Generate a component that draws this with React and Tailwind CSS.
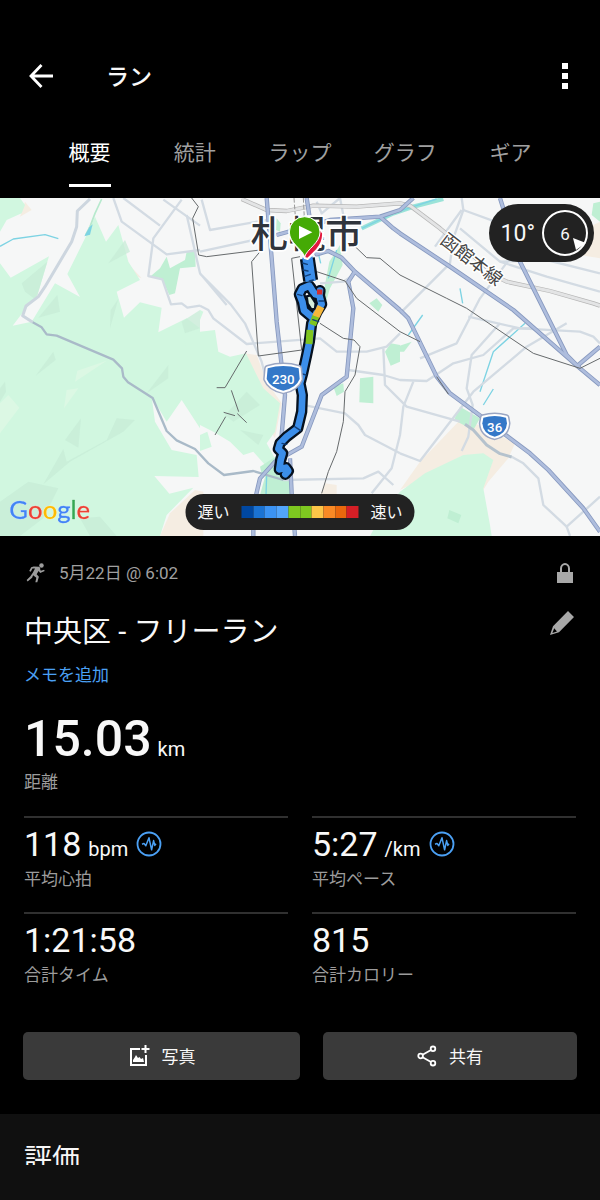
import React from "react";

const FOREST = "#d1f7e0";
const PARK = "#bfefd3";
const SHADE = "#c7ecd7";
const SAND = "#f5ede2";
const MINOR = "#d3dbe3";
const WATER = "#7dd3e3";

const forests = [
  "M0 9H60L75 30L65 55L20 75L0 110Z",
  "M0 205L32 248L147 184L112 300L70 350L38 392L95 380L165 265L240 306L202 237L255 130L285 65L318 140L355 90L385 200L420 255L350 290L372 368L420 322L485 338L475 412L560 370L600 400V700L545 615L500 680L455 605L465 680L515 765L590 780L596 846L463 843L508 896L580 878L500 960L480 1023H0Z",
  "M550 415L600 410L645 405L655 470L690 485L738 475L760 520L790 580L840 625L825 710L800 745L830 800L800 815L760 770L730 780L690 740L640 710L600 690Z",
  "M1200 890L1275 835L1390 780L1450 775L1480 795L1450 880L1470 990L1475 1023H1110L1150 950Z",
  "M600 345L610 350L600 375Z",
  "M600 720L622 710L635 755L600 768Z",
];
const sands = [
  "M600 1023H480L510 955L585 885L610 890V1023Z",
  "M735 475L770 480L800 560L845 625L825 730L805 700L825 640L770 560Z",
  "M1200 885L1260 800L1375 680L1440 690L1545 745L1525 790L1465 860L1450 885L1440 790L1380 785L1290 840Z",
  "M75 20L95 45L60 65Z",
  "M1700 130L1800 80V190L1740 180Z",
  "M975 865L1010 870L1010 900L960 900Z",
  "M360 105L388 210L425 250L400 240L385 200Z",
];
const parks = [
  "M450 245L480 220L500 185L510 220L555 195L560 170L585 165L587 215L540 220L525 295L508 300L485 250Z",
  "M1080 550L1120 545V625L1078 622Z",
  "M1000 575L1030 565L1032 590L1010 603Z",
  "M1108 325L1130 310L1147 330L1135 350Z",
  "M1155 470L1172 445L1200 450V500L1172 512Z",
  "M1190 455L1235 440L1212 470H1190Z",
  "M1362 675L1380 635L1440 670L1420 705Z",
  "M1348 945L1384 960L1375 985L1342 970Z",
  "M805 810L875 820L870 900H780Z",
  "M780 815L850 770L820 820L788 850Z",
  "M1780 25L1800 20V80L1775 60Z",
  "M988 200L1020 150L1028 210L990 280L975 330L965 320Z",
  "M830 70L842 85L840 110L828 105Z",
];
const shades = [
  "M65 265L142 200L108 315L75 290Z",
  "M325 205L375 135L390 170Z",
  "M330 400L332 345L355 312Z",
  "M115 368L172 300L180 350Z",
  "M545 380L600 345V400L555 415Z",
  "M107 542L160 470L167 495Z",
  "M195 735L243 670L235 758Z",
  "M130 868L190 762L200 800L320 735L350 670L405 675L370 710L210 800Z",
  "M440 595L505 510V550Z",
  "M0 920L85 860L175 880L130 970L60 1023H0Z",
  "M240 970L300 965L350 1023H270Z",
  "M0 580L15 560L18 590L0 620Z",
  "M675 660L740 590L780 630L700 680Z",
  "M720 705L775 750L790 720Z",
];
const lightPatches = [
  "M0 625L25 600L58 638L0 715Z",
  "M225 560L232 527L320 497Z",
  "M192 640L200 585L235 580Z",
];
const minorRoads = [
  "M340 9L365 80L500 178L600 165",
  "M370 9L480 92M490 14L600 92",
  "M545 14L460 130L445 243L487 253L513 328L545 325L562 338L600 332",
  "M560 60L600 235L680 330M600 236L692 328L735 385L785 500L800 560",
  "M600 332L625 345L640 370L740 447L960 430L1010 470L1100 470L1160 455L1200 415",
  "M605 14L630 105L800 75M600 170L830 120",
  "M920 632L1035 655L1075 690L1095 720L1200 775",
  "M850 855L1090 850L1135 830L1180 870M1115 895L1175 820L1200 720L1210 635L1240 560",
  "M1150 460L1155 570L1220 635L1380 680",
  "M1045 525L1150 540L1200 555L1280 558L1360 505L1450 480L1540 400L1590 400",
  "M1200 775L1260 798L1420 590L1580 455L1700 385",
  "M1260 490L1370 445L1440 310L1530 190",
  "M1200 355L1350 205L1360 130L1390 45L1385 9",
  "M1385 45L1305 155M1390 45L1500 85M1380 100L1500 200L1640 245L1800 290",
  "M1500 200L1640 195L1800 235",
  "M1405 365L1560 400L1740 410L1780 425L1800 445",
  "M1500 385L1415 480L1400 580L1418 630L1405 725L1385 768",
  "M1700 995L1800 905M1700 995L1710 1023",
  "M1700 995L1630 930L1615 850L1570 805L1535 785",
  "M950 20L965 55L1020 9M1020 9L1030 60",
  "M960 265L1030 260L1060 240",
];
const highways = [
  "M920 9L940 140L950 178L985 168L1025 188L1065 230L1200 345",
  "M800 9L815 190L830 380L855 600L845 720",
  "M1063 232L1045 260L1060 340L1040 545L965 600L905 755L825 800L780 850L760 935V1023",
  "M1200 115L1350 215L1540 345L1740 520L1800 570",
  "M1200 345L1225 370L1310 545L1350 595L1445 665L1530 730L1590 775L1645 825L1750 940L1800 1010",
  "M1500 9L1560 200L1640 360L1700 480L1735 515",
  "M1735 510L1800 455",
  "M830 120L990 75L1140 65L1200 45L1240 9",
  "M870 790L875 895L885 1023",
  "M845 720L840 790L835 840",
  "M1140 65L1180 100L1200 115",
];
const rails = [
  "M575 9L595 35L578 70L596 180L620 185L780 165M780 170L755 200L775 483L905 465L875 190L900 185",
  "M950 230L1035 258L1070 310L1200 410L1260 440",
  "M960 385L1030 430L1062 435L1080 455L1065 540L1035 590L1030 680L1010 770L985 830L965 895",
  "M1050 140L1100 188L1140 190L1200 240L1340 310L1400 340L1530 428L1600 475L1740 520L1800 490",
  "M740 468L675 578H650M694 586L716 650M671 652L705 662M712 656L740 683M677 665L645 720",
  "M1310 545L1345 597",
];

const trackPath =
  "M928 272L907 281L898 298L907 320L912 346L938 368M930 275L944 297L958 301L965 328L950 352L935 385L928 440L920 480L908 535L900 565L907 600L905 650L893 700L860 725L840 745L835 762L848 775L842 795L838 823L858 818L865 828L856 838M958 301L960 287";

function Shield({ shape, x, y, children }) {
  return (
    <g strokeLinejoin="round" fontFamily="Roboto, sans-serif" fontWeight="500" textAnchor="middle">
      <path d={shape} fill="#3478c8" stroke="#9aa6c3" strokeWidth="21" />
      <path d={shape} fill="#3478c8" stroke="#fff" strokeWidth="12" />
      <path d={shape} fill="#3478c8" />
      <text x={x} y={y} fontSize="40" fill="#fff">{children}</text>
    </g>
  );
}

function RunMap() {
  return (
    <svg viewBox="0 9 1800 1014" className="block h-auto w-full bg-[#f6f7f7]" role="img" aria-label="ランのルート">
      <g>
        {sands.map((d) => <path key={d} d={d} fill={SAND} />)}
        {forests.map((d) => <path key={d} d={d} fill={FOREST} />)}
        {shades.map((d) => <path key={d} d={d} fill={SHADE} opacity="0.75" />)}
        {lightPatches.map((d) => <path key={d} d={d} fill="#dcf8e4" />)}
        {parks.map((d) => <path key={d} d={d} fill={PARK} />)}
      </g>
      <g fill="none" stroke={WATER} strokeLinejoin="round">
        <path d="M0 154L40 132L135 119L175 131" strokeWidth="4" />
        <path d="M305 12L285 55L270 95L257 120" stroke="#b7e9cd" strokeWidth="5" />
        <path d="M253 124L268 97L278 88L270 119Z" fill={WATER} stroke="none" />
        <path d="M1085 100L1180 55L1240 35L1330 12" stroke="#9ae3d8" strokeWidth="13" />
        <path d="M1085 100L1180 55L1240 35L1310 12" strokeWidth="4" />
        <path d="M1380 280L1388 325M1225 420L1268 360M1575 385L1480 470L1440 590M1450 630L1480 582M1010 165L985 250M955 175L962 205M800 840L798 900" strokeWidth="4" />
      </g>
      <g fill="none" stroke={MINOR} strokeWidth="7" strokeLinejoin="round">
        {minorRoads.map((d) => <path key={d} d={d} />)}
        <path d="M270 12L232 48L230 95L215 140L135 275L115 305L78 333L68 362L98 382" stroke="#cdd6df" strokeWidth="9" />
        <path d="M98 382L125 397L140 418L170 422L340 494L366 520L370 545L384 562L458 609L500 708L530 736L585 762L625 805L672 840L760 828L850 855" stroke="#a9bac8" strokeWidth="7" />
        <path d="M1395 688L1420 705L1460 750L1500 776L1535 786" stroke="#b5c2cd" strokeWidth="9" />
      </g>
      <g fill="none" strokeLinejoin="round">
        <path d="M725 12L800 45L860 48L940 32L1070 35L1200 25L1230 32L1320 100L1500 250L1520 260L1650 288L1780 325L1800 332" stroke="#b5b5b5" strokeWidth="13" />
        <path d="M725 12L800 45L860 48L940 32L1070 35L1200 25L1230 32L1320 100L1500 250L1520 260L1650 288L1780 325L1800 332" stroke="#e3e4e5" strokeWidth="9" />
      </g>
      <g fill="none" stroke="#8799bf" strokeWidth="13" strokeLinejoin="round">
        {highways.map((d) => <path key={d} d={d} />)}
      </g>
      <g fill="none" stroke="#aebddd" strokeWidth="8" strokeLinejoin="round">
        {highways.map((d) => <path key={d} d={d} />)}
      </g>
      <g fill="none" stroke="#666a6c" strokeWidth="3">
        {rails.map((d) => <path key={d} d={d} />)}
        <path d="M882 9L890 120M910 9L916 130" strokeDasharray="14 6" stroke="#999" />
      </g>

      <g fontFamily='"Noto Sans CJK JP", sans-serif' strokeLinejoin="round" paintOrder="stroke" stroke="#fff">
        <text x="752" y="160" fontSize="112" fontWeight="500" fill="#30343b" strokeWidth="10">札幌市</text>
        <text x="1318" y="142" fontSize="54" fill="#444" strokeWidth="9" transform="rotate(38 1318 142)">函館本線</text>
      </g>

      <g fill="none" strokeLinejoin="round" strokeLinecap="round">
        <g stroke="#06111f">
          <path d={trackPath} strokeWidth="34" />
          <path d="M922 190L932 257" strokeWidth="45" strokeLinecap="butt" />
        </g>
        <g stroke="#3b8eea">
          <path d={trackPath} strokeWidth="20" />
          <path d="M922 186L932 259" strokeWidth="31" strokeLinecap="butt" />
        </g>
        <path d="M920 304L932 301L947 324L945 342L934 343L923 326Z" fill="#d5eedc" stroke="#06111f" strokeWidth="7" />
        <path d="M963 335L947 366" stroke="#f6b83b" strokeWidth="22" strokeLinecap="butt" />
        <path d="M947 364L938 390M930 405L927 447" stroke="#7fc51f" strokeWidth="21" strokeLinecap="butt" />
        <path d="M951 291H967" stroke="#d32f2f" strokeWidth="15" strokeLinecap="butt" />
        <path d="M907 204L922 208M909 225L924 228M914 244L931 238M928 258L940 255M893 298L906 302M957 318H971M938 374L956 380M902 535L918 540M884 695L902 707M846 745L860 748" stroke="#123f78" strokeWidth="4" />
      </g>

      <path d="M914 189C908 162 868 145 868 111A46 46 0 0 1 958 100L969 114Q971 141 951 164L923 192Z" fill="#e2183d" stroke="#fff" strokeWidth="6" strokeLinejoin="round" />
      <path d="M914 186C908 162 868 145 868 111A46 46 0 0 1 960 111C960 145 920 162 914 186Z" fill="#45aa05" stroke="#fff" strokeWidth="3" />
      <path d="M897 92L937 112L897 132Z" fill="#fff" />

      <Shield shape="M803 520Q850 506 896 520L899 552Q889 579 850 587Q811 579 800 552Z" x={850} y={567}>230</Shield>
      <Shield shape="M1450 668Q1484 658 1518 668L1521 685Q1519 717 1484 725Q1449 717 1447 685Z" x={1484} y={711}>36</Shield>

      <text
        x="28"
        y="973"
        fontFamily="Lato, sans-serif"
        fontSize="77"
        strokeWidth="1"
        strokeLinejoin="round"
        className="[filter:drop-shadow(0_0_1px_white)_drop-shadow(0_0_1px_white)]"
      >
        <tspan fill="#4285f4" stroke="#4285f4">G</tspan>
        <tspan fill="#ea4335" stroke="#ea4335">o</tspan>
        <tspan fill="#fbbc05" stroke="#fbbc05">o</tspan>
        <tspan fill="#4285f4" stroke="#4285f4">g</tspan>
        <tspan fill="#34a853" stroke="#34a853">l</tspan>
        <tspan fill="#ea4335" stroke="#ea4335">e</tspan>
      </text>
    </svg>
  );
}

const legendColors = [
  "bg-[#0047a0]", "bg-[#1b73d3]", "bg-[#3b93f3]", "bg-[#52a5fb]", "bg-[#7ec820]",
  "bg-[#7ec820]", "bg-[#fcc648]", "bg-[#f98a25]", "bg-[#ea680d]", "bg-[#d61f26]",
];

const tabs = ["概要", "統計", "ラップ", "グラフ", "ギア"];

function PulseIcon() {
  return (
    <svg viewBox="0 0 26 26" className="size-[26px]" fill="none" stroke="#4ba0f4" aria-hidden="true">
      <circle cx="13" cy="13" r="11.5" strokeWidth="1.8" />
      <path d="M6 13.2L8 12.4L9.8 14.8L13 6.8L15.6 18.8L17.6 9.6L18.8 14.4L20 12.8" strokeWidth="1.5" strokeLinejoin="round" />
    </svg>
  );
}

function Stat({ value, unit, label, pulse }) {
  return (
    <div className="h-24 border-t-2 border-[#303030]">
      <div className="mt-2 flex h-9 items-center">
        <div className="flex items-baseline gap-[7px]">
          <span className="text-[34px] leading-9">{value}</span>
          {unit && <span className="text-[20px] leading-5">{unit}</span>}
        </div>
        {pulse && (
          <button type="button" aria-label={`${label}の詳細`} className="ml-2">
            <PulseIcon />
          </button>
        )}
      </div>
      <div className="mt-[5px] text-[17px] leading-6 text-[#9c9c9c]">{label}</div>
    </div>
  );
}

export default function App() {
  return (
    <div className="min-h-screen bg-black font-[Roboto,'Noto_Sans_CJK_JP',sans-serif] text-[#f8f8f8]">
      <header className="flex items-center pt-[52px] pr-[23px] pl-[29px]">
        <button type="button" aria-label="戻る" className="flex h-12 w-[77px] items-center">
          <svg viewBox="0 0 24 24" className="size-6" fill="none" stroke="#fff" strokeWidth="2.8" aria-hidden="true">
            <path d="M12.5 1L2 12L12.5 23M2 12H24" />
          </svg>
        </button>
        <h1 className="flex-1 pt-1 text-[23px] leading-8 font-medium">ラン</h1>
        <button type="button" aria-label="メニュー" className="flex h-12 w-6 flex-col items-center justify-center gap-1">
          <span className="size-[6px] bg-white" />
          <span className="size-[6px] bg-white" />
          <span className="size-[6px] bg-white" />
        </button>
      </header>

      <nav className="grid h-[98px] grid-cols-5 px-[37px] pt-[29px]">
        {tabs.map((tab, i) => (
          <a
            key={tab}
            href="#"
            aria-current={i === 0 ? "page" : undefined}
            className={
              i === 0
                ? "h-[58px] justify-self-center border-b-[3px] border-white pt-2 text-[21px] leading-8 text-white"
                : "h-[58px] justify-self-center pt-2 text-[21px] leading-8 text-[#a0a0a0]"
            }
          >
            {tab}
          </a>
        ))}
      </nav>

      <section className="relative">
        <RunMap />
        <div className="absolute top-[6px] right-[6px] flex h-[58px] items-center gap-[7px] rounded-full bg-[#222] pr-[6px] pl-3">
          <span className="pt-0.5 text-[23px] leading-8">10°</span>
          <div className="relative flex size-[46px] items-center justify-center rounded-full border-2 border-white pt-0.5 text-[17px] leading-6">
            6
            <svg viewBox="0 0 14 14" className="absolute right-0 bottom-[3px] size-[14px]" aria-hidden="true">
              <path d="M1 1L14 6L4 13Z" fill="#fff" />
            </svg>
          </div>
        </div>
        <div className="absolute bottom-[6px] left-1/2 flex h-9 -translate-x-1/2 items-center gap-3 rounded-full bg-[#222] px-3 text-[16px] leading-6 whitespace-nowrap">
          <span className="pt-0.5">遅い</span>
          <div className="flex h-3 w-[117px]">
            {legendColors.map((c, i) => <span key={i} className={`flex-1 ${c}`} />)}
          </div>
          <span className="pt-0.5">速い</span>
        </div>
      </section>

      <main>
        <section className="px-6 pt-6">
          <div className="flex h-[26px] items-center">
            <svg viewBox="0 0 60 62" className="ml-0.5 size-5" fill="#9c9c9c" aria-hidden="true">
              <circle cx="47" cy="8" r="7" />
              <path d="M23 11L39 12Q45 14 43 20L45 24L55 21L57 25L43 31L38 25L32 35L39 43L34 60H28L31 46L21 38L18 46L4 57L1 53L12 42L20 30L27 17L19 17L14 27L9 25L15 13Z" />
            </svg>
            <time className="ml-[13px] flex-1 text-[17px] leading-6 text-[#a0a0a0]">5月22日 @ 6:02</time>
            <svg viewBox="0 0 16 20" className="mr-[3px] h-5 w-4" aria-label="非公開" role="img">
              <rect y="9" width="16" height="11" fill="#a8a8a8" />
              <path d="M4 10V5.5A4 4.5 0 0 1 12 5.5V10" fill="none" stroke="#a8a8a8" strokeWidth="2" />
            </svg>
          </div>

          <div className="mt-[25px] flex h-10 items-center justify-between">
            <h2 className="pt-0.5 text-[29px] leading-10">中央区 - フリーラン</h2>
            <button type="button" aria-label="名前を編集" className="mr-0.5 mb-4">
              <svg viewBox="0 0 24 24" className="size-6" fill="#a8a8a8" aria-hidden="true">
                <path d="M18 0L24 6L9 21.2L0 24L3 15.2ZM4.2 17.2L2.4 22L7 20.4Z" fillRule="evenodd" />
              </svg>
            </button>
          </div>
          <a href="#" className="mt-3 block w-fit text-[17px] leading-6 text-[#4ba0f4]">メモを追加</a>

          <div className="mt-6 flex items-baseline gap-[6px]">
            <span className="text-[50px] leading-[56px] font-medium">15.03</span>
            <span className="text-[20px] leading-5">km</span>
          </div>
          <div className="mt-[3px] text-[17px] leading-6 text-[#9c9c9c]">距離</div>

          <div className="mt-[22px] grid grid-cols-2 gap-x-6">
            <Stat value="118" unit="bpm" label="平均心拍" pulse />
            <Stat value="5:27" unit="/km" label="平均ペース" pulse />
            <Stat value="1:21:58" label="合計タイム" />
            <Stat value="815" label="合計カロリー" />
          </div>
        </section>

        <div className="grid grid-cols-[277fr_254fr] gap-[23px] px-[23px] pt-6 pb-[34px]">
          <button type="button" className="flex h-12 items-center justify-center gap-3 rounded-[5px] bg-[#3a3a3a] text-[17px] leading-6">
            <svg viewBox="0 0 22 22" className="size-[22px]" fill="none" stroke="#fff" strokeWidth="2" aria-hidden="true">
              <path d="M12 4H3V20H18V10M17.5 0V8M13.5 4H21.5" />
              <path d="M5 17V15L7 12L8 10L10 13L11.5 12L13 14L15 13L16 17Z" fill="#fff" stroke="none" />
            </svg>
            <span className="pt-0.5">写真</span>
          </button>
          <button type="button" className="flex h-12 items-center justify-center gap-3 rounded-[5px] bg-[#3a3a3a] text-[17px] leading-6">
            <svg viewBox="0 0 20 22" className="h-[22px] w-5" fill="none" stroke="#fff" strokeWidth="1.8" aria-hidden="true">
              <circle cx="3.6" cy="11" r="2.3" />
              <circle cx="16" cy="3.8" r="2.3" />
              <circle cx="16" cy="18.2" r="2.3" />
              <path d="M5.6 9.8L14 5M5.6 12.2L14 17" />
            </svg>
            <span className="pt-0.5">共有</span>
          </button>
        </div>

        <section className="bg-[#101010] px-6 pt-[30px] pb-[35px]">
          <h2 className="h-[21px] overflow-hidden text-[28px] leading-8">評価</h2>
        </section>
      </main>
    </div>
  );
}
